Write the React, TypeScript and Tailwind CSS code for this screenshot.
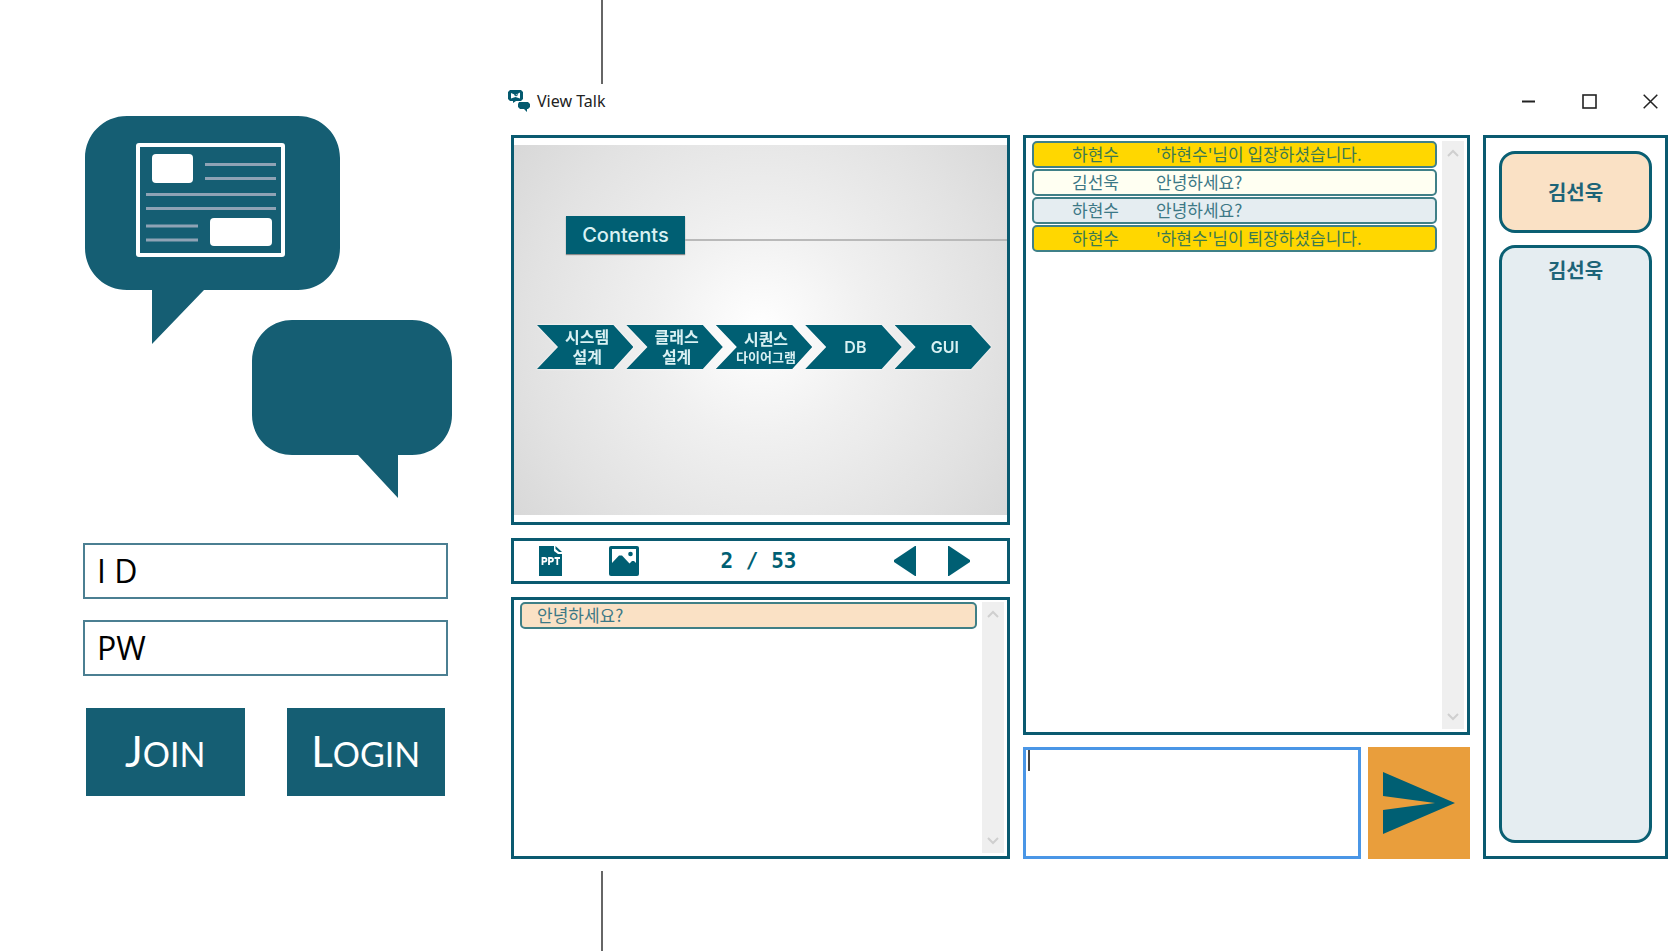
import React from "react";

const SANS = "font-['Noto_Sans','Noto_Sans_CJK_KR',sans-serif]";
const KR = "font-['Noto_Sans_CJK_KR',sans-serif]";

function Logo() {
  return (
    <svg viewBox="83 116 369 382" className="block w-full" fill="#155e73" aria-hidden="true">
      <path d="M127 116H298C322 116 340 135 340 158V248C340 271 322 290 298 290H204L152 344V290H127C103 290 85 271 85 248V158C85 135 103 116 127 116Z" />
      <path d="M292 320H412C435 320 452 339 452 361V415C452 437 435 455 412 455H398V498L358 455H292C269 455 252 437 252 415V361C252 339 269 320 292 320Z" />
      <rect x="138" y="145" width="145" height="110" rx="1" fill="none" stroke="#fff" strokeWidth="4" />
      <rect x="152" y="154" width="41" height="29" rx="4" fill="#fff" />
      <rect x="210" y="218" width="62" height="28" rx="4" fill="#fff" />
      <path
        d="M205 164.500H276M205 178.500H276M146 194.500H276M146 208.500H276M146 226H198M146 240H198"
        stroke="#8fa3b5"
        strokeWidth="3"
      />
    </svg>
  );
}

function Field({ id, label, type }: { id: string; label: string; type: string }) {
  return (
    <div className="flex h-14 items-center border-2 border-[#4b7f92] pl-3 text-black">
      <label htmlFor={id} className="text-[32px] leading-10">
        {label}
      </label>
      <input id={id} type={type} className="h-full min-w-0 flex-1 px-3 text-2xl outline-none" />
    </div>
  );
}

function SmallCapsButton({ first, rest }: { first: string; rest: string }) {
  return (
    <button
      type="button"
      className="flex h-[88px] items-center justify-center bg-[#155e73] font-['Lato',sans-serif] text-[34px] leading-[44px] text-white"
    >
      <span>
        <span className="text-[42px]">{first}</span>
        {rest}
      </span>
    </button>
  );
}

function Login() {
  return (
    <section className="pt-[116px] pr-[47px] pl-[83px]">
      <Logo />
      <form className="mt-[45px] mr-1 font-['Open_Sans',sans-serif]">
        <div className="flex flex-col gap-[21px]">
          <Field id="user-id" label="I D" type="text" />
          <Field id="user-pw" label="PW" type="password" />
        </div>
        <div className="mt-8 grid grid-cols-2 gap-[42px] px-[3px]">
          <SmallCapsButton first="J" rest="OIN" />
          <SmallCapsButton first="L" rest="OGIN" />
        </div>
      </form>
    </section>
  );
}

function TitleBar() {
  return (
    <header className="flex h-[34px] items-center pr-[22px] pl-[9px] text-[#222]">
      <svg viewBox="0 0 22 22" className="h-[22px] w-[22px]" fill="#045a6f" aria-hidden="true">
        <path d="M2 0H13L15 2V9L13 11H8L5 13V11H2L0 9V2Z" />
        <path d="M3 3 7.500 5 12 2.500V8.500L7.500 7 3 8.500Z" fill="#fff" />
        <path d="M6 4.500 8 6 10 4.500" fill="none" stroke="#045a6f" />
        <path d="M11 12H20L22 14V17L20 19H19V22L16 19H12L10 17V14Z" />
      </svg>
      <h1 className={"ml-[7px] text-base leading-6 " + SANS}>View Talk</h1>
      <div className="ml-auto flex gap-[46px]">
        <button type="button" aria-label="Minimize">
          <svg viewBox="0 0 15 15" className="size-[15px]" fill="none" stroke="currentColor" strokeWidth="2">
            <path d="M1 7.500H14" />
          </svg>
        </button>
        <button type="button" aria-label="Maximize">
          <svg viewBox="0 0 15 15" className="size-[15px]" fill="none" stroke="currentColor" strokeWidth="1.600">
            <rect x="1" y="1" width="13" height="13" />
          </svg>
        </button>
        <button type="button" aria-label="Close">
          <svg viewBox="0 0 15 15" className="size-[15px]" fill="none" stroke="currentColor" strokeWidth="1.500">
            <path d="M.7 .7 14.300 14.300M14.300 .7 .7 14.300" />
          </svg>
        </button>
      </div>
    </header>
  );
}

const STEPS: { lines: string[]; small?: boolean }[] = [
  { lines: ["시스템", "설계"] },
  { lines: ["클래스", "설계"] },
  { lines: ["시퀀스", "다이어그램"], small: true },
  { lines: ["DB"] },
  { lines: ["GUI"] },
];

function Slide() {
  return (
    <div className="border-3 border-[#0a5a70] py-[7px]">
      <div className="aspect-[4/3] bg-[radial-gradient(circle_at_50%_50%,#ffffff_0%,#f0f0f0_35%,#e2e2e2_75%,#d8d8d8_100%)] pt-[71px]">
        <div className="flex items-center pl-[52px]">
          <h2 className="flex h-[38px] w-[119px] items-center justify-center bg-[#005f73] font-['Inter',sans-serif] text-[20px] leading-6 font-medium text-[#d9f1f3] shadow-[0_1px_1px_#8a8a8a]">
            Contents
          </h2>
          <div className="mt-[9px] h-[2px] flex-1 bg-[#b9b9b9]" />
        </div>
        <ol className="mt-[71px] flex pr-4 pl-[23px] drop-shadow-[0_0_1px_#ffffff]">
          {STEPS.map((s) => (
            <li
              key={s.lines.join()}
              className="-mr-[7px] flex h-11 flex-1 flex-col items-center justify-center bg-[#005f73] pl-1 text-center font-['Inter','Noto_Sans_CJK_KR',sans-serif] text-[16px] leading-5 font-semibold whitespace-nowrap text-[#d9f1f3] [clip-path:polygon(0_0,calc(100%_-_20px)_0,100%_50%,calc(100%_-_20px)_100%,0_100%,21px_50%)] last:mr-0"
            >
              <span>{s.lines[0]}</span>
              {s.lines[1] && <span className={s.small ? "text-[13px] leading-4" : ""}>{s.lines[1]}</span>}
            </li>
          ))}
        </ol>
      </div>
    </div>
  );
}

function Toolbar() {
  return (
    <div className="flex h-[46px] items-center border-3 border-[#0a5a70] pr-[37px] pl-[25px] text-[#005f73]">
      <button type="button" aria-label="PPT">
        <svg viewBox="0 0 23 30" className="h-[30px] w-[23px]" fill="currentColor">
          <path d="M0 0H15V5L19 8H23V30H0Z" />
          <path d="M16.500 0 23 6H20L16.500 3Z" />
          <path
            d="M3.500 19V12H5.500Q7.500 12 7.500 13.800T5.500 15.700H3.500M10 19V12H12Q14 12 14 13.800T12 15.700H10M15.500 12H21M18.300 12V19"
            fill="none"
            stroke="#fff"
            strokeWidth="1.800"
          />
        </svg>
      </button>
      <button type="button" aria-label="Image" className="ml-[47px]">
        <svg viewBox="0 0 30 30" className="h-[30px] w-[30px]" fill="currentColor">
          <rect width="30" height="30" rx="2" />
          <path d="M3 3H27V17L25 15H23L20.500 17.500 13 9.500H10L3 17Z" fill="#fff" />
          <circle cx="21.500" cy="8" r="2.300" />
        </svg>
      </button>
      <p className="flex-1 pl-1 text-center font-['DejaVu_Sans_Mono',monospace] text-[21px] leading-7 font-bold whitespace-pre">
        2 / 53
      </p>
      <button type="button" aria-label="Previous" className="ml-5">
        <svg viewBox="0 0 22 30" className="h-[30px] w-[22px]" fill="currentColor">
          <path d="M21 0H22V30H21L0 16V14Z" />
        </svg>
      </button>
      <button type="button" aria-label="Next" className="ml-8">
        <svg viewBox="0 0 22 30" className="h-[30px] w-[22px]" fill="currentColor">
          <path d="M1 0H0V30H1L22 16V14Z" />
        </svg>
      </button>
    </div>
  );
}

function ScrollTrack() {
  return (
    <div className="flex w-[22px] flex-col items-center justify-between bg-[#efefef] py-2 text-[#cfcfcf]">
      <svg viewBox="0 0 12 8" className="h-2 w-3" fill="none" stroke="currentColor" strokeWidth="2">
        <path d="M1 7 6 2 11 7" />
      </svg>
      <svg viewBox="0 0 12 8" className="h-2 w-3" fill="none" stroke="currentColor" strokeWidth="2">
        <path d="M1 1 6 6 11 1" />
      </svg>
    </div>
  );
}

function Notes() {
  return (
    <div className="flex min-h-[200px] flex-1 gap-[5px] border-3 border-[#0a5a70] px-[3px] pt-[2px] pb-[3px]">
      <ul className="flex-1 pl-[3px]">
        <li
          className={
            "h-[27px] rounded-[5px] border-2 border-[#3f7f86] bg-[#fae1c5] px-[15px] text-[17px] leading-[22px] text-[#3c7886] " + KR
          }
        >
          안녕하세요?
        </li>
      </ul>
      <ScrollTrack />
    </div>
  );
}

const MESSAGES = [
  { id: 1, name: "하현수", text: "'하현수'님이 입장하셨습니다.", tone: "bg-[#ffd700] text-[#3c7a50]" },
  { id: 2, name: "김선욱", text: "안녕하세요?", tone: "bg-[#fffff2] text-[#3c7886]" },
  { id: 3, name: "하현수", text: "안녕하세요?", tone: "bg-[#e5edf1] text-[#3c7886]" },
  { id: 4, name: "하현수", text: "'하현수'님이 퇴장하셨습니다.", tone: "bg-[#ffd700] text-[#3c7a50]" },
];

function Chat() {
  return (
    <div className="flex flex-col gap-3">
      <div className="flex flex-1 gap-[5px] border-3 border-[#0a5a70] p-[3px]">
        <ul className={"flex flex-1 flex-col gap-px pl-[3px] text-[17px] leading-[22px] " + KR}>
          {MESSAGES.map((m) => (
            <li key={m.id} className={"flex h-[27px] rounded-[5px] border-2 border-[#3f8088] " + m.tone}>
              <span className="w-[122px] pl-[38px]">{m.name}</span>
              <span>{m.text}</span>
            </li>
          ))}
        </ul>
        <ScrollTrack />
      </div>
      <form className="flex h-28 gap-[7px]">
        <div className="relative min-w-0 flex-1">
          <textarea
            aria-label="Message"
            className="block h-full w-full resize-none border-3 border-[#4a96e6] px-[3px] text-[17px] leading-6 outline-none"
          />
          <span className="absolute top-[3px] left-[5px] h-[21px] w-[2px] bg-[#444]" aria-hidden="true" />
        </div>
        <button type="button" aria-label="Send" className="w-[102px] bg-[#e99e3c] pl-[15px]">
          <svg viewBox="0 0 72 62" className="h-[62px] w-[72px]" fill="#005f73">
            <path d="M0 0 72 31 0 62V38L52 31 0 24Z" />
          </svg>
        </button>
      </form>
    </div>
  );
}

function Users() {
  const name = "text-[20px] leading-7 font-bold text-[#1d6478] " + KR;
  return (
    <aside className="flex flex-col gap-3 border-3 border-[#0a5a70] p-[13px] text-center">
      <div className="flex h-[82px] items-center justify-center rounded-2xl border-3 border-[#0a5f73] bg-[#fae1c5]">
        <p className={name}>김선욱</p>
      </div>
      <div className="flex-1 rounded-2xl border-3 border-[#0a5f73] bg-[#e5edf1] pt-2">
        <p className={name}>김선욱</p>
      </div>
    </aside>
  );
}

export default function App() {
  return (
    <main className="grid min-h-screen grid-cols-[minmax(0,499fr)_minmax(0,1181fr)] bg-white">
      <Login />
      <div className="flex min-w-0 flex-col">
        <div className="ml-[102px] h-[84px] w-[2px] bg-[#666]" />
        <section>
          <TitleBar />
          <div className="grid grid-cols-[minmax(0,499fr)_minmax(0,447fr)_minmax(0,185fr)] gap-[13px] px-3 pt-[17px] pb-3">
            <div className="flex min-h-[724px] flex-col gap-[13px]">
              <Slide />
              <Toolbar />
              <Notes />
            </div>
            <Chat />
            <Users />
          </div>
        </section>
        <div className="ml-[102px] w-[2px] flex-1 bg-[#666]" />
      </div>
    </main>
  );
}
